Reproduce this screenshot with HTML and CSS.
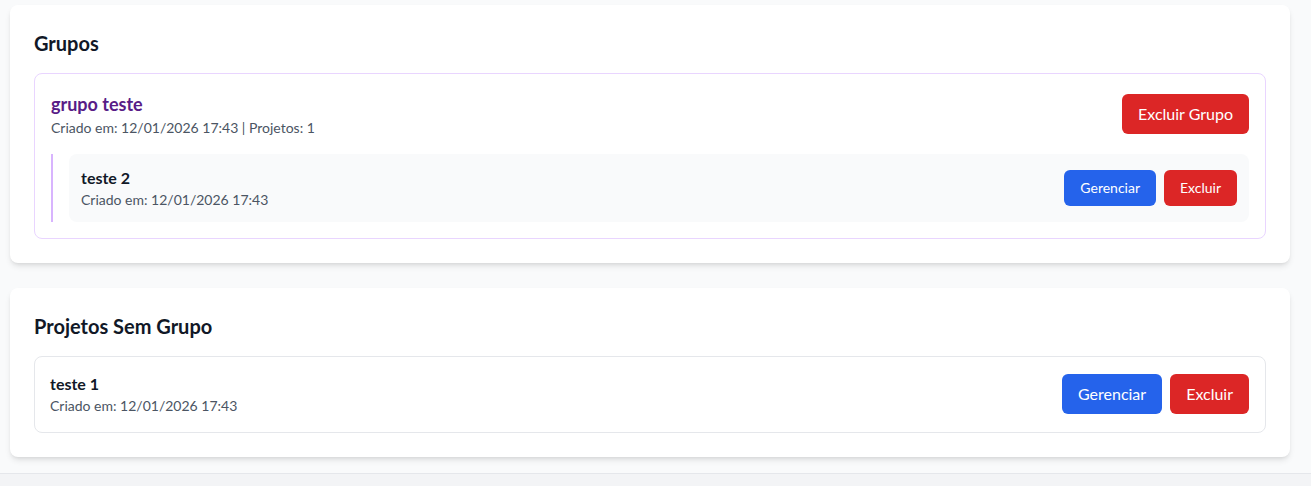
FILE: index.html
```html
<!DOCTYPE html>
<html lang="pt-BR">
<head>
<meta charset="utf-8">
<title>Grupos</title>
<link rel="stylesheet" href="styles.css">
</head>
<body>
<main class="main">
  <section class="card">
    <h2 class="card-title">Grupos</h2>
    <div class="group">
      <div class="group-head">
        <div>
          <h3 class="group-name">grupo teste</h3>
          <p class="meta">Criado em: 12/01/2026 17:43 | Projetos: 1</p>
        </div>
        <button class="btn btn-red">Excluir Grupo</button>
      </div>
      <div class="group-projects">
        <div class="project project-nested">
          <div>
            <h4 class="project-name">teste 2</h4>
            <p class="meta">Criado em: 12/01/2026 17:43</p>
          </div>
          <div class="actions">
            <button class="btn btn-sm btn-blue">Gerenciar</button>
            <button class="btn btn-sm btn-red">Excluir</button>
          </div>
        </div>
      </div>
    </div>
  </section>

  <section class="card">
    <h2 class="card-title">Projetos Sem Grupo</h2>
    <div class="project project-plain">
      <div>
        <h4 class="project-name">teste 1</h4>
        <p class="meta">Criado em: 12/01/2026 17:43</p>
      </div>
      <div class="actions">
        <button class="btn btn-blue">Gerenciar</button>
        <button class="btn btn-red">Excluir</button>
      </div>
    </div>
  </section>
</main>
</body>
</html>
```
FILE: styles.css
```css
* { box-sizing: border-box; }
html, body { margin: 0; padding: 0; }
body {
  background: #f3f4f6;
  font-family: Lato, "Noto Sans", sans-serif;
  color: #111827;
}
h2, h3, h4, p { margin: 0; }

.main {
  background: #f9fafb;
  border-bottom: 1px solid #e5e7eb;
  padding: 5px 0 16px 10px;
  display: flex;
  flex-direction: column;
  gap: 25px;
}

.card {
  width: 1280px;
  background: #ffffff;
  border-radius: 8px;
  box-shadow: 0 4px 6px -1px rgba(0,0,0,0.1), 0 2px 4px -2px rgba(0,0,0,0.1);
  padding: 24px;
}

.card-title {
  font-size: 20px;
  line-height: 28px;
  font-weight: 700;
  color: #111827;
  margin-bottom: 16px;
}

.group {
  border: 1px solid #e9d5ff;
  border-radius: 8px;
  padding: 16px;
}

.group-head {
  display: flex;
  justify-content: space-between;
  align-items: center;
}

.group-name {
  font-size: 18px;
  line-height: 28px;
  font-weight: 700;
  color: #581c87;
}

.meta {
  font-size: 14px;
  line-height: 20px;
  color: #4b5563;
}

.group-projects {
  margin-top: 16px;
  border-left: 2px solid #d8b4fe;
  padding-left: 16px;
}

.project {
  display: flex;
  justify-content: space-between;
  align-items: center;
  border-radius: 8px;
}

.project-nested {
  background: #f9fafb;
  padding: 12px;
}

.project-plain {
  border: 1px solid #e5e7eb;
  padding: 15px 16px 16px 15px;
}

.project-name {
  font-size: 16px;
  line-height: 24px;
  font-weight: 700;
  color: #111827;
}

.actions {
  display: flex;
  gap: 8px;
}

.btn {
  border: none;
  border-radius: 6px;
  color: #ffffff;
  font-family: inherit;
  font-size: 16px;
  line-height: 24px;
  padding: 8px 16px;
  cursor: pointer;
}
.btn-sm {
  font-size: 14px;
  line-height: 20px;
  padding: 8px 16px;
}
.btn-red { background: #dc2626; }
.btn-blue { background: #2563eb; }
```
